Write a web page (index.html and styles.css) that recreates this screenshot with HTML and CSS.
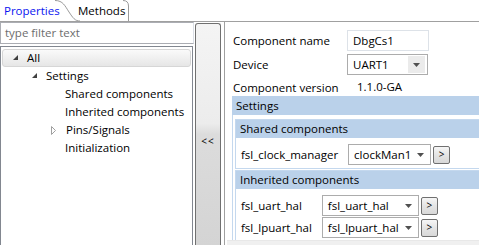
FILE: index.html
```html
<!DOCTYPE html>
<html lang="en">
<head>
  <meta charset="UTF-8" />
  <title>Component Inspector</title>
  <link rel="stylesheet" href="styles.css">
</head>
<body>
  <div class="tabs">
    <div class="tab active">Properties</div>
    <div class="tab">Methods</div>
    <svg class="tab-lines" width="130" height="22" viewBox="0 0 130 22">
      <path d="M55 0.5 C63 0.5 65 6 69 12 S75 21 80 21" fill="none" stroke="#9a9a9a" />
      <path d="M123 0.5 Q128.5 0.5 128.5 6 V21" fill="none" stroke="#9a9a9a" />
    </svg>
  </div>

  <div class="main">
    <div class="left">
      <div class="filter">type filter text</div>
      <div class="tree">
        <div class="node selected lvl0">
          <span class="twisty"><svg width="6" height="6"><path d="M5 0 V5 H0 Z" fill="#404040" /></svg></span>All
        </div>
        <div class="node lvl1">
          <span class="twisty"><svg width="6" height="6"><path d="M5 0 V5 H0 Z" fill="#404040" /></svg></span>Settings
        </div>
        <div class="node lvl2"><span class="twisty"></span>Shared components</div>
        <div class="node lvl2"><span class="twisty"></span>Inherited components</div>
        <div class="node lvl1b">
          <span class="twisty"><svg width="6" height="9"><path d="M0.5 0.5 L4.5 4.5 L0.5 8.5 Z" fill="none" stroke="#a0a0a0" /></svg></span>Pins/Signals
        </div>
        <div class="node lvl2"><span class="twisty"></span>Initialization</div>
      </div>
    </div>

    <div class="sash">
      <div class="sash-btn">&lt;&lt;</div>
    </div>

    <div class="right">
      <div class="content">
        <div class="form">
          <span class="lbl">Component name</span>
          <div class="textbox">DbgCs1</div>
          <span class="lbl">Device</span>
          <div class="combo device"><span class="val">UART1</span><span class="arrow"><svg width="7" height="4"><path d="M0 0 H7 L3.5 4 Z" fill="#505050" /></svg></span></div>
          <span class="lbl">Component version</span>
          <span class="version">1.1.0-GA</span>
        </div>

        <div class="section">
          <div class="shead">Settings</div>
          <div class="sbody">
            <div class="group">
              <div class="ghead">Shared components</div>
              <div class="grows">
                <span class="lbl">fsl_clock_manager</span>
                <div class="pick">
                  <div class="combo w83"><span class="val">clockMan1</span><span class="arrow"><svg width="7" height="4"><path d="M0 0 H7 L3.5 4 Z" fill="#505050" /></svg></span></div>
                  <div class="mini">&gt;</div>
                </div>
              </div>
            </div>
            <div class="group">
              <div class="ghead">Inherited components</div>
              <div class="grows">
                <span class="lbl">fsl_uart_hal</span>
                <div class="pick">
                  <div class="combo w94"><span class="val">fsl_uart_hal</span><span class="arrow"><svg width="7" height="4"><path d="M0 0 H7 L3.5 4 Z" fill="#505050" /></svg></span></div>
                  <div class="mini">&gt;</div>
                </div>
                <span class="lbl">fsl_lpuart_hal</span>
                <div class="pick">
                  <div class="combo w94"><span class="val">fsl_lpuart_hal</span><span class="arrow"><svg width="7" height="4"><path d="M0 0 H7 L3.5 4 Z" fill="#505050" /></svg></span></div>
                  <div class="mini">&gt;</div>
                </div>
              </div>
            </div>
          </div>
        </div>
      </div>
      <div class="hscroll"></div>
    </div>
  </div>
</body>
</html>
```

FILE: styles.css
```css
body {
  margin: 0;
  width: 479px;
  height: 245px;
  overflow: hidden;
  background: #fff;
  font-family: "Open Sans", "Noto Sans", sans-serif;
  font-size: 11.5px;
  color: #000;
}
.tabs {
  position: relative;
  display: flex;
  height: 21px;
  border-bottom: 1px solid #a0a0a0;
}
.tab {
  line-height: 21px;
}
.tab.active {
  color: #0a14f0;
  padding-left: 4px;
  width: 74px;
}
.tab-lines {
  position: absolute;
  left: 0;
  top: 0;
}
.main {
  display: flex;
  height: 223px;
}
.left {
  width: 193px;
  display: flex;
  flex-direction: column;
}
.filter {
  height: 20px;
  line-height: 20px;
  border: 1px solid #abadb3;
  border-right-color: #dbdfe6;
  padding-left: 4px;
  color: #6d6d6d;
  width: 188px;
}
.tree {
  margin-top: 2px;
  flex: 1;
  border: 1px solid #828790;
  border-bottom: none;
  padding-top: 2px;
}
.node {
  height: 18px;
  line-height: 18px;
  display: flex;
  align-items: center;
  margin: 0 1px;
  box-sizing: border-box;
  white-space: nowrap;
}
.node.selected {
  background: linear-gradient(#fafafa, #e6e6e6);
  border: 1px solid #d6d6d6;
  border-radius: 3px;
}
.twisty {
  width: 19px;
  display: flex;
  align-items: center;
  padding-left: 5px;
  box-sizing: border-box;
}
.lvl0 { padding-left: 5px; }
.lvl1 { padding-left: 25px; }
.lvl1b { padding-left: 45px; }
.lvl1b .twisty { padding-left: 4px; }
.lvl2 { padding-left: 44px; }
.sash {
  width: 31px;
  padding: 1px 3px 0 2px;
  box-sizing: border-box;
  display: flex;
}
.sash-btn {
  flex: 1;
  border: 1px solid #707070;
  border-bottom: none;
  border-radius: 3px 3px 0 0;
  background: linear-gradient(#f4f4f4, #ececec 45%, #dcdcdc 50%, #d4d4d4);
  display: flex;
  align-items: center;
  justify-content: center;
  font-size: 10px;
  letter-spacing: 1px;
  padding-top: 12px;
}
.right {
  flex: 1;
  border-left: 1px solid #a0a0a0;
  display: flex;
  flex-direction: column;
  overflow: hidden;
}
.content {
  flex: none;
  height: 218px;
  padding-left: 7px;
  overflow: hidden;
}
.hscroll {
  flex: none;
  height: 17px;
  background: #f0f0f0;
  border-top: 1px solid #e8e8e8;
  margin-left: 2px;
}
.form {
  display: grid;
  grid-template-columns: 114px auto;
  row-gap: 3px;
  align-items: center;
  padding: 8px 0 0 1px;
}
.lbl {
  white-space: nowrap;
}
.textbox {
  width: 75px;
  height: 19px;
  line-height: 19px;
  border: 1px solid #dde2e8;
  padding-left: 5px;
}
.combo {
  display: flex;
  align-items: center;
  height: 19px;
  border: 1px solid #acacac;
  background: #fff;
  box-sizing: content-box;
}
.combo .val {
  flex: 1;
  padding-left: 5px;
  line-height: 17px;
  white-space: nowrap;
  overflow: hidden;
}
.combo .arrow {
  width: 17px;
  height: 17px;
  margin-right: 1px;
  display: flex;
  align-items: center;
  justify-content: center;
}
.combo.device {
  width: 79px;
}
.combo.device .arrow {
  background: #ebebeb;
  margin-right: 2px;
}
.version {
  padding-left: 10px;
  height: 18px;
  line-height: 18px;
}
.section {
  border-left: 1px solid #c4d8ee;
}
.shead {
  background: #bad1ea;
  height: 19px;
  line-height: 19px;
  padding-left: 4px;
  margin-left: -1px;
}
.sbody {
  padding: 4px 0 0 2px;
  display: flex;
  flex-direction: column;
  gap: 1px;
}
.group {
  border: 1px solid #c4d8ee;
  border-right: none;
}
.ghead {
  background: #bad1ea;
  height: 18px;
  line-height: 18px;
  padding-left: 4px;
}
.grows {
  display: grid;
  grid-template-columns: auto auto;
  justify-content: start;
  column-gap: 10px;
  row-gap: 1px;
  align-items: center;
  padding: 6px 0 3px 5px;
}
.pick {
  display: flex;
  align-items: center;
  gap: 2px;
}
.w83 { width: 81px; }
.w94 { width: 95px; }
.mini {
  width: 15px;
  height: 16px;
  border: 1px solid #707070;
  border-radius: 2px;
  background: linear-gradient(#f6f6f6, #e4e4e4 50%, #d8d8d8);
  font-size: 10px;
  line-height: 15px;
  text-align: center;
}
```
